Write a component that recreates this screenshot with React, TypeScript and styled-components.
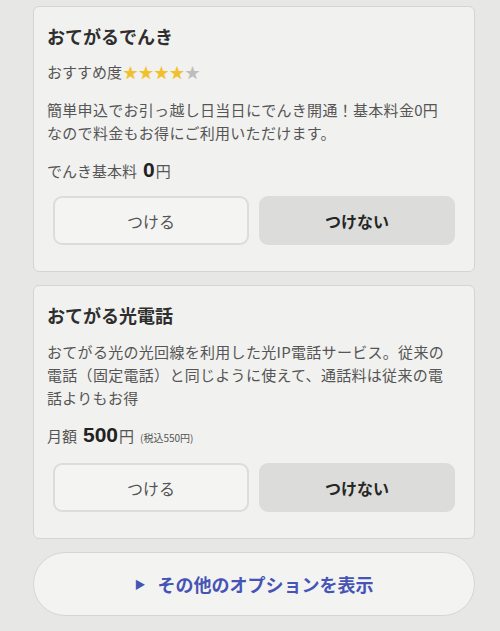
import React from 'react';
import styled, { createGlobalStyle } from 'styled-components';

const GlobalStyle = createGlobalStyle`
  html, body {
    margin: 0;
    padding: 0;
    background: #e7e7e5;
  }
  body {
    font-family: 'Noto Sans CJK JP', 'Noto Sans', sans-serif;
    color: #444;
  }
`;

type Option = {
  title: string;
  rating?: number;
  description: string[];
  priceLabel: string;
  price: string;
  note?: string;
};

const options: Option[] = [
  {
    title: 'おてがるでんき',
    rating: 4,
    description: [
      '簡単申込でお引っ越し日当日にでんき開通！基本料金0円',
      'なので料金もお得にご利用いただけます。',
    ],
    priceLabel: 'でんき基本料',
    price: '0',
  },
  {
    title: 'おてがる光電話',
    description: [
      'おてがる光の光回線を利用した光IP電話サービス。従来の',
      '電話（固定電話）と同じように使えて、通話料は従来の電',
      '話よりもお得',
    ],
    priceLabel: '月額',
    price: '500',
    note: '(税込550円)',
  },
];

const OptionCard = ({ option }: { option: Option }): JSX.Element => {
  return (
    <Card>
      <Title>{option.title}</Title>
      {option.rating !== undefined && (
        <Rating>
          おすすめ度
          <Stars>
            {[0, 1, 2, 3, 4].map((i) => (
              <Star key={i} $on={i < (option.rating ?? 0)}>
                ★
              </Star>
            ))}
          </Stars>
        </Rating>
      )}
      <Description>
        {option.description.map((line) => (
          <Line key={line}>{line}</Line>
        ))}
      </Description>
      <Price>
        {option.priceLabel}
        <Amount>{option.price}</Amount>円
        {option.note && <Note>{option.note}</Note>}
      </Price>
      <Buttons>
        <ChoiceBtn>つける</ChoiceBtn>
        <ChoiceBtn $selected>つけない</ChoiceBtn>
      </Buttons>
    </Card>
  );
};

export default function App(): JSX.Element {
  return (
    <>
      <GlobalStyle />
      <Page>
        {options.map((o) => (
          <OptionCard key={o.title} option={o} />
        ))}
        <MoreBtn>
          <Arrow>▶</Arrow>その他のオプションを表示
        </MoreBtn>
      </Page>
    </>
  );
}

const Page = styled.div`
  display: flex;
  flex-direction: column;
  gap: 13px;
  width: 442px;
  padding: 6px 0 0 33px;
`;

const Card = styled.div`
  display: flex;
  flex-direction: column;
  background: #f1f1ef;
  border: 1.5px solid #d4d4d2;
  border-radius: 6px;
  padding: 17px 13px 26px 13px;
`;

const Title = styled.div`
  font-size: 18px;
  font-weight: 700;
  line-height: 24px;
  color: #2e2e2e;
  margin-bottom: 13px;
`;

const Rating = styled.div`
  display: flex;
  align-items: center;
  font-size: 15px;
  line-height: 22px;
  color: #555;
  margin-bottom: 15px;
`;

const Stars = styled.span`
  display: flex;
  margin-left: 1px;
`;

const Star = styled.span<{ $on?: boolean }>`
  font-size: 15px;
  width: 15.5px;
  color: ${(p) => (p.$on ? '#f0c12c' : '#bdbdbb')};
`;

const Description = styled.div`
  font-size: 15px;
  line-height: 23px;
  letter-spacing: 0.3px;
  color: #555;
`;

const Line = styled.div`
  white-space: nowrap;
`;

const Price = styled.div`
  display: flex;
  align-items: baseline;
  font-size: 15px;
  color: #555;
  margin-top: 14px;
  line-height: 24px;
`;

const Amount = styled.span`
  font-family: 'Liberation Sans', Arial, sans-serif;
  font-size: 21px;
  font-weight: 700;
  color: #222;
  margin: 0 1px 0 6px;
`;

const Note = styled.span`
  font-size: 10px;
  color: #555;
  margin-left: 6px;
`;

const Buttons = styled.div`
  display: grid;
  grid-template-columns: 1fr 1fr;
  gap: 10px;
  margin: 13px 6px 0 6px;
`;

const ChoiceBtn = styled.button<{ $selected?: boolean }>`
  height: 49px;
  border-radius: 9px;
  font-family: inherit;
  font-size: 16px;
  font-weight: ${(p) => (p.$selected ? 700 : 400)};
  color: ${(p) => (p.$selected ? '#262626' : '#555')};
  background: ${(p) => (p.$selected ? '#dcdcda' : '#f4f4f2')};
  border: 2.5px solid ${(p) => (p.$selected ? '#dcdcda' : '#dcdcda')};
  cursor: pointer;
`;

const MoreBtn = styled.button`
  display: flex;
  align-items: center;
  justify-content: center;
  height: 64px;
  border-radius: 32px;
  background: #f3f3f1;
  border: 1.5px solid #d6d6d4;
  font-family: inherit;
  font-size: 18px;
  font-weight: 700;
  color: #4654b6;
  cursor: pointer;
`;

const Arrow = styled.span`
  font-size: 11px;
  margin-right: 12px;
`;
